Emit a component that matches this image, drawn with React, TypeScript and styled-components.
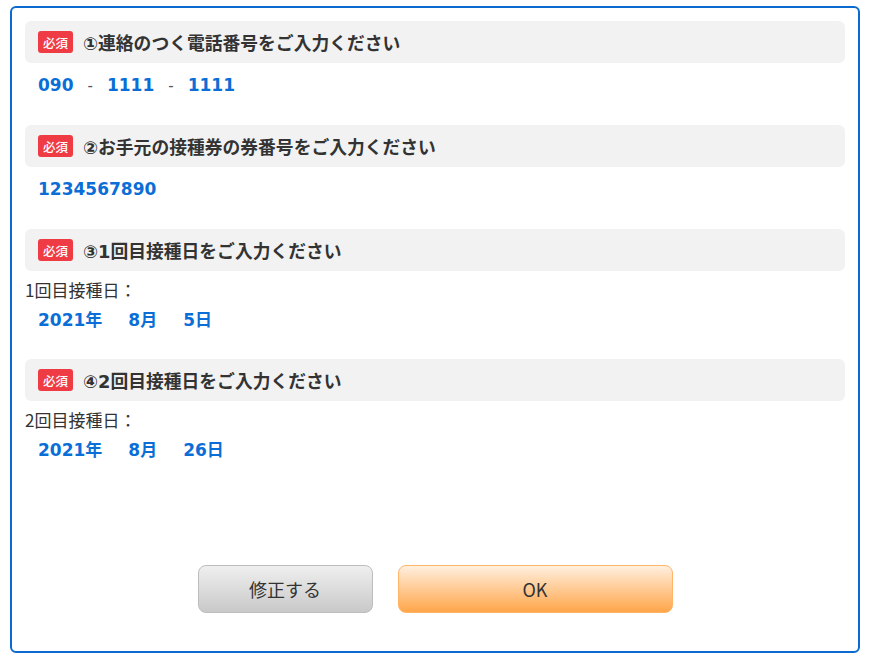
import React from 'react';
import styled, { createGlobalStyle } from 'styled-components';

const GlobalStyle = createGlobalStyle`
    body {
        margin: 0;
        background: #fff;
        font-family: "DejaVu Sans", "Noto Sans CJK JP", sans-serif;
        color: #333;
    }
`;

const Page = styled.div`
    padding: 6px 10px;
`;

const Panel = styled.div`
    box-sizing: border-box;
    width: 850px;
    height: 647px;
    border: 2px solid #0a6acf;
    border-radius: 6px;
    padding: 13px 13px 38px;
    display: flex;
    flex-direction: column;
`;

const Section = styled.section`
    margin-bottom: 26px;
`;

const Header = styled.div`
    height: 42px;
    box-sizing: border-box;
    background-color: #f2f2f2;
    border-radius: 6px;
    display: flex;
    align-items: center;
    padding-left: 13px;
    margin-bottom: 8px;
`;

const Badge = styled.span`
    width: 35px;
    height: 22px;
    border-radius: 3px;
    background-color: #ee3b44;
    color: #fff;
    font-family: "Noto Sans CJK JP", sans-serif;
    font-size: 12.5px;
    font-weight: 500;
    display: flex;
    align-items: center;
    justify-content: center;
    margin-right: 10px;
`;

const Title = styled.h2`
    margin: 0;
    font-size: 17.8px;
    font-weight: 700;
    color: #333;
`;

const ValueRow = styled.div<{ $height?: number }>`
    display: flex;
    align-items: center;
    gap: ${({ $height }) => ($height ? '26px' : '14px')};
    height: ${({ $height }) => $height ?? 28}px;
    padding-left: 13px;
`;

const Value = styled.span`
    font-size: 17px;
    font-weight: 700;
    color: #0b6ed6;
`;

const Dash = styled.span`
    font-size: 15px;
    color: #555;
    padding-top: 2px;
`;

const Label = styled.div`
    height: 22px;
    line-height: 22px;
    margin-bottom: 2px;
    font-family: "Noto Sans CJK JP", sans-serif;
    font-size: 17px;
    color: #333;
`;

const ButtonRow = styled.div`
    margin-top: auto;
    display: flex;
    justify-content: center;
    gap: 25px;
`;

const Button = styled.button<{ $primary?: boolean }>`
    width: ${({ $primary }) => ($primary ? 275 : 175)}px;
    height: 48px;
    border-radius: 8px;
    border: 1px solid ${({ $primary }) => ($primary ? '#ffb466' : '#bdbdbd')};
    background: ${({ $primary }) =>
        $primary
            ? 'linear-gradient(to bottom, #ffefde, #ffa64a)'
            : 'linear-gradient(to bottom, #efefef, #c9c9c9)'};
    font-family: "Noto Sans CJK JP", sans-serif;
    font-size: 18px;
    color: #333;
    cursor: pointer;
`;

const sections = [
    { title: '①連絡のつく電話番号をご入力ください' },
    { title: '②お手元の接種券の券番号をご入力ください' },
];

function SectionHeader({ title }: { title: string }) {
    return (
        <Header>
            <Badge>必須</Badge>
            <Title>{title}</Title>
        </Header>
    );
}

export default function App() {
    return (
        <Page>
            <GlobalStyle />
            <Panel>
                <Section>
                    <SectionHeader title={sections[0].title} />
                    <ValueRow>
                        <Value>090</Value>
                        <Dash>-</Dash>
                        <Value>1111</Value>
                        <Dash>-</Dash>
                        <Value>1111</Value>
                    </ValueRow>
                </Section>

                <Section>
                    <SectionHeader title={sections[1].title} />
                    <ValueRow>
                        <Value>1234567890</Value>
                    </ValueRow>
                </Section>

                <Section>
                    <SectionHeader title='③1回目接種日をご入力ください' />
                    <Label>1回目接種日：</Label>
                    <ValueRow $height={30}>
                        <Value>2021年</Value>
                        <Value>8月</Value>
                        <Value>5日</Value>
                    </ValueRow>
                </Section>

                <Section>
                    <SectionHeader title='④2回目接種日をご入力ください' />
                    <Label>2回目接種日：</Label>
                    <ValueRow $height={30}>
                        <Value>2021年</Value>
                        <Value>8月</Value>
                        <Value>26日</Value>
                    </ValueRow>
                </Section>

                <ButtonRow>
                    <Button>修正する</Button>
                    <Button $primary>OK</Button>
                </ButtonRow>
            </Panel>
        </Page>
    );
}
